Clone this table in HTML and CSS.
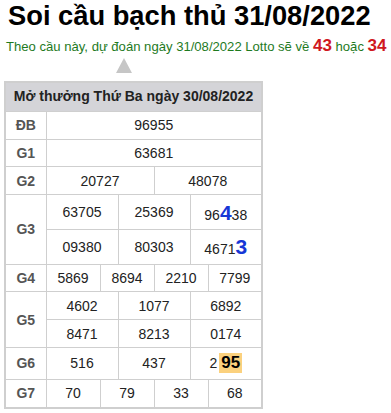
FILE: index.html
```html
<!DOCTYPE html>
<html lang="vi">
<head>
<meta charset="utf-8">
<title>Soi cầu bạch thủ 31/08/2022</title>
<link rel="stylesheet" href="styles.css">
</head>
<body>
<div class="page">
  <h1 class="title">Soi cầu bạch thủ 31/08/2022</h1>
  <p class="lead">Theo cầu này, dự đoán ngày 31/08/2022 Lotto sẽ về <b class="num">43</b> hoặc <b class="num">34</b></p>
  <div class="arrow"></div>
  <table class="kq">
    <colgroup>
      <col class="c-lbl">
      <col><col><col><col><col><col><col><col><col><col><col><col>
    </colgroup>
    <thead>
      <tr><th colspan="13" class="head">Mở thưởng Thứ Ba ngày 30/08/2022</th></tr>
    </thead>
    <tbody>
      <tr><td class="lbl">ĐB</td><td colspan="12">96955</td></tr>
      <tr><td class="lbl">G1</td><td colspan="12">63681</td></tr>
      <tr><td class="lbl">G2</td><td colspan="6">20727</td><td colspan="6">48078</td></tr>
      <tr><td class="lbl" rowspan="2">G3</td><td colspan="4">63705</td><td colspan="4">25369</td><td colspan="4">96<span class="hit">4</span>38</td></tr>
      <tr><td colspan="4">09380</td><td colspan="4">80303</td><td colspan="4">4671<span class="hit">3</span></td></tr>
      <tr><td class="lbl">G4</td><td colspan="3">5869</td><td colspan="3">8694</td><td colspan="3">2210</td><td colspan="3">7799</td></tr>
      <tr><td class="lbl" rowspan="2">G5</td><td colspan="4">4602</td><td colspan="4">1077</td><td colspan="4">6892</td></tr>
      <tr><td colspan="4">8471</td><td colspan="4">8213</td><td colspan="4">0174</td></tr>
      <tr><td class="lbl">G6</td><td colspan="4">516</td><td colspan="4">437</td><td colspan="4">2<span class="mark">95</span></td></tr>
      <tr><td class="lbl">G7</td><td colspan="3">70</td><td colspan="3">79</td><td colspan="3">33</td><td colspan="3">68</td></tr>
    </tbody>
  </table>
</div>
</body>
</html>
```

FILE: styles.css
```css
html, body {
  margin: 0;
  padding: 0;
  background: #fff;
}
body {
  font-family: "Liberation Sans", Arial, sans-serif;
  color: #222;
}
.page {
  padding: 0 4px;
}
.title {
  margin: 0 0 0 4px;
  font-size: 27.3px;
  line-height: 32px;
  font-weight: bold;
  color: #000;
  white-space: nowrap;
}
.lead {
  margin: 4px 0 0 2px;
  font-size: 13.1px;
  line-height: 20px;
  color: #1e7a1e;
  white-space: nowrap;
}
.lead .num {
  color: #d0181e;
  font-size: 17px;
}
.arrow {
  width: 0;
  height: 0;
  margin: 1px 0 0 112px;
  border-left: 8px solid transparent;
  border-right: 8px solid transparent;
  border-bottom: 15px solid #c6c6c6;
}
.kq {
  margin-top: 8px;
  width: 259px;
  border-collapse: collapse;
  table-layout: fixed;
  font-size: 14px;
  border: 2px solid #cfcfcf;
}
.c-lbl {
  width: 41px;
}
.kq th, .kq td {
  border: 1px solid #cfcfcf;
  text-align: center;
  padding: 5.4px 0;
  line-height: 16px;
  color: #222;
  white-space: nowrap;
}
.kq .head {
  background: #d4d4d8;
  font-size: 14px;
  line-height: 17px;
  font-weight: bold;
  color: #222;
}
.kq .lbl {
  font-weight: bold;
  color: #555;
}
.hit {
  color: #1737d6;
  font-weight: bold;
  font-size: 21px;
  line-height: 23px;
}
.mark {
  display: inline-block;
  background: #fbd17e;
  color: #000;
  font-weight: bold;
  font-size: 17px;
  line-height: 20px;
  padding: 0 2px;
  margin-left: 2px;
}
```
